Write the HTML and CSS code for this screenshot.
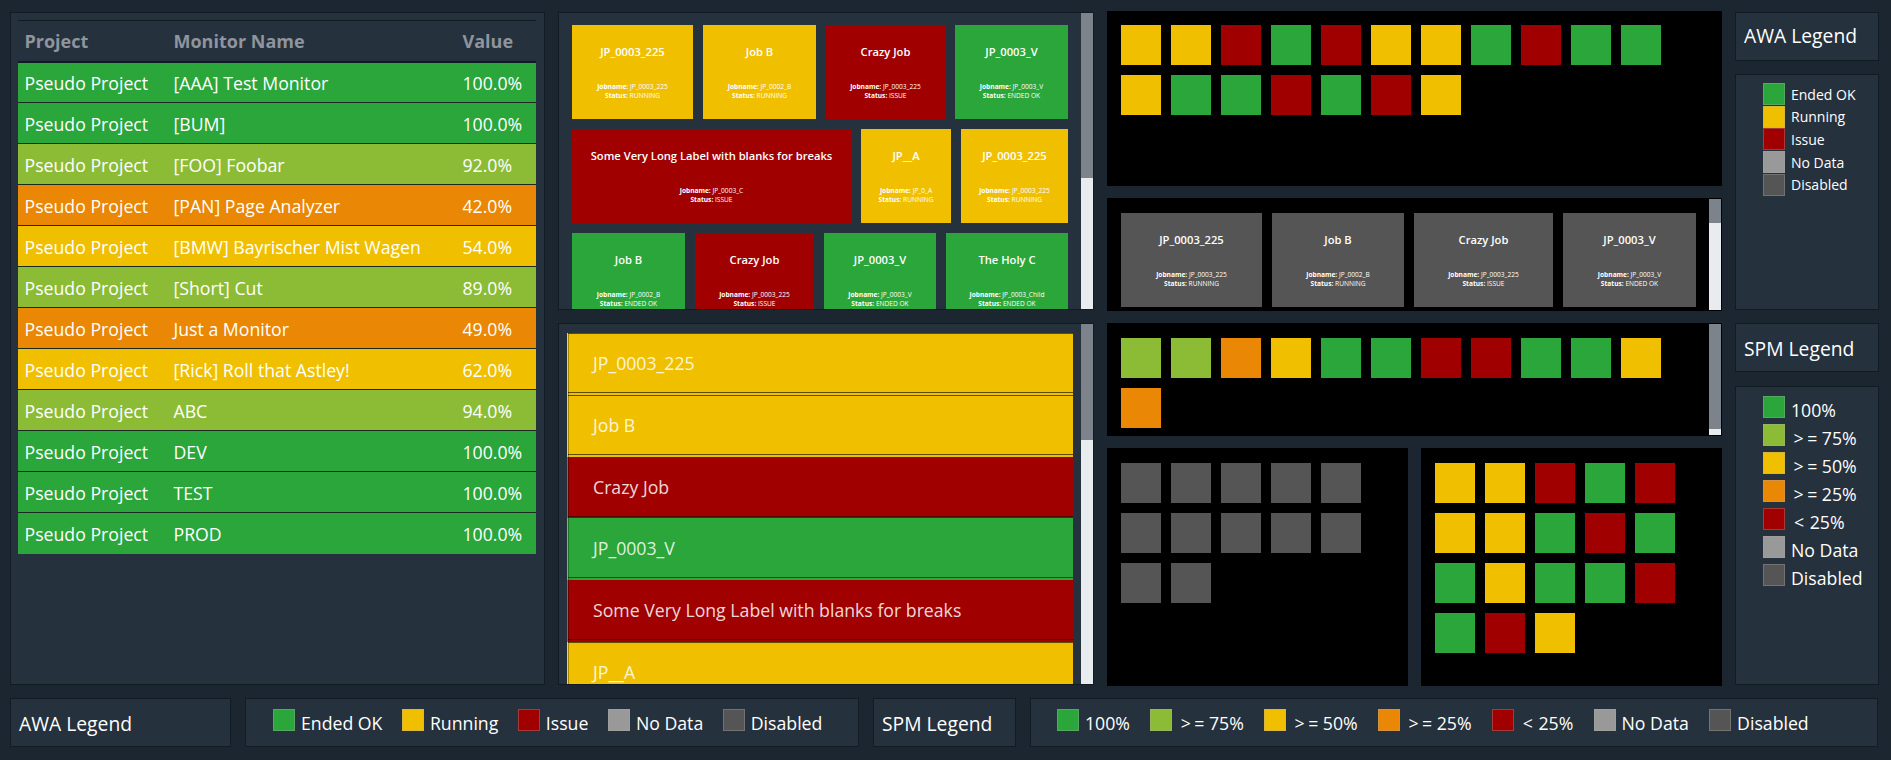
FILE: index.html
```html
<!DOCTYPE html>
<html lang="en">
<head>
  <meta charset="UTF-8">
  <title>Monitor Dashboard</title>
  <link rel="stylesheet" href="styles.css">
</head>
<body>

  <div class="dashboard">

    <section class="panel table-panel">
      <table class="monitor-table">
        <thead>
          <tr><th>Project</th><th>Monitor Name</th><th>Value</th></tr>
        </thead>
        <tbody>
          <tr class="bg-full"><td>Pseudo Project</td><td>[AAA] Test Monitor</td><td>100.0%</td></tr>
          <tr class="bg-full"><td>Pseudo Project</td><td>[BUM]</td><td>100.0%</td></tr>
          <tr class="bg-high"><td>Pseudo Project</td><td>[FOO] Foobar</td><td>92.0%</td></tr>
          <tr class="bg-low"><td>Pseudo Project</td><td>[PAN] Page Analyzer</td><td>42.0%</td></tr>
          <tr class="bg-mid"><td>Pseudo Project</td><td>[BMW] Bayrischer Mist Wagen</td><td>54.0%</td></tr>
          <tr class="bg-high"><td>Pseudo Project</td><td>[Short] Cut</td><td>89.0%</td></tr>
          <tr class="bg-low"><td>Pseudo Project</td><td>Just a Monitor</td><td>49.0%</td></tr>
          <tr class="bg-mid"><td>Pseudo Project</td><td>[Rick] Roll that Astley!</td><td>62.0%</td></tr>
          <tr class="bg-high"><td>Pseudo Project</td><td>ABC</td><td>94.0%</td></tr>
          <tr class="bg-full"><td>Pseudo Project</td><td>DEV</td><td>100.0%</td></tr>
          <tr class="bg-full"><td>Pseudo Project</td><td>TEST</td><td>100.0%</td></tr>
          <tr class="bg-full"><td>Pseudo Project</td><td>PROD</td><td>100.0%</td></tr>
        </tbody>
      </table>
    </section>

    <section class="panel scroll-panel">
      <div class="scroll-body tiles-body">
        <div class="tile-row row-a">
          <div class="tile bg-mid"><h4>JP_0003_225</h4><p><b>Jobname:</b> JP_0003_225<br><b>Status:</b> RUNNING</p></div>
          <div class="tile bg-mid"><h4>Job B</h4><p><b>Jobname:</b> JP_0002_B<br><b>Status:</b> RUNNING</p></div>
          <div class="tile bg-issue"><h4>Crazy Job</h4><p><b>Jobname:</b> JP_0003_225<br><b>Status:</b> ISSUE</p></div>
          <div class="tile bg-full"><h4>JP_0003_V</h4><p><b>Jobname:</b> JP_0003_V<br><b>Status:</b> ENDED OK</p></div>
        </div>
        <div class="tile-row row-b">
          <div class="tile bg-issue"><h4>Some Very Long Label with blanks for breaks</h4><p><b>Jobname:</b> JP_0003_C<br><b>Status:</b> ISSUE</p></div>
          <div class="tile bg-mid"><h4>JP__A</h4><p><b>Jobname:</b> JP_0_A<br><b>Status:</b> RUNNING</p></div>
          <div class="tile bg-mid"><h4>JP_0003_225</h4><p><b>Jobname:</b> JP_0003_225<br><b>Status:</b> RUNNING</p></div>
        </div>
        <div class="tile-row row-c">
          <div class="tile bg-full"><h4>Job B</h4><p><b>Jobname:</b> JP_0002_B<br><b>Status:</b> ENDED OK</p></div>
          <div class="tile bg-issue"><h4>Crazy Job</h4><p><b>Jobname:</b> JP_0003_225<br><b>Status:</b> ISSUE</p></div>
          <div class="tile bg-full"><h4>JP_0003_V</h4><p><b>Jobname:</b> JP_0003_V<br><b>Status:</b> ENDED OK</p></div>
          <div class="tile bg-full"><h4>The Holy C</h4><p><b>Jobname:</b> JP_0003_Child<br><b>Status:</b> ENDED OK</p></div>
        </div>
      </div>
      <div class="scrollbar"><div class="thumb thumb-tiles"></div></div>
    </section>

    <div class="black-stack stack-top">
      <section class="black-panel squares-panel top-squares">
        <i class="sq bg-mid"></i><i class="sq bg-mid"></i><i class="sq bg-issue"></i><i class="sq bg-full"></i><i class="sq bg-issue"></i><i class="sq bg-mid"></i><i class="sq bg-mid"></i><i class="sq bg-full"></i><i class="sq bg-issue"></i><i class="sq bg-full"></i><i class="sq bg-full"></i>
        <i class="sq bg-mid"></i><i class="sq bg-full"></i><i class="sq bg-full"></i><i class="sq bg-issue"></i><i class="sq bg-full"></i><i class="sq bg-issue"></i><i class="sq bg-mid"></i>
      </section>
      <section class="black-panel scroll-panel grey-panel">
        <div class="scroll-body grey-body">
          <div class="tile-row row-grey">
            <div class="tile bg-off"><h4>JP_0003_225</h4><p><b>Jobname:</b> JP_0003_225<br><b>Status:</b> RUNNING</p></div>
            <div class="tile bg-off"><h4>Job B</h4><p><b>Jobname:</b> JP_0002_B<br><b>Status:</b> RUNNING</p></div>
            <div class="tile bg-off"><h4>Crazy Job</h4><p><b>Jobname:</b> JP_0003_225<br><b>Status:</b> ISSUE</p></div>
            <div class="tile bg-off"><h4>JP_0003_V</h4><p><b>Jobname:</b> JP_0003_V<br><b>Status:</b> ENDED OK</p></div>
          </div>
        </div>
        <div class="scrollbar"><div class="thumb thumb-grey"></div></div>
      </section>
    </div>

    <div class="legend-col legend-col-top">
      <div class="panel legend-title">AWA Legend</div>
      <div class="panel legend-box legend-small">
        <div class="legend-item"><i class="swatch bg-full"></i>Ended OK</div>
        <div class="legend-item"><i class="swatch bg-mid"></i>Running</div>
        <div class="legend-item"><i class="swatch bg-issue"></i>Issue</div>
        <div class="legend-item"><i class="swatch bg-none"></i>No Data</div>
        <div class="legend-item"><i class="swatch bg-off"></i>Disabled</div>
      </div>
    </div>

    <section class="panel scroll-panel">
      <div class="scroll-body list-body">
        <div class="list-item bg-mid">JP_0003_225</div>
        <div class="list-item bg-mid">Job B</div>
        <div class="list-item bg-issue">Crazy Job</div>
        <div class="list-item bg-full">JP_0003_V</div>
        <div class="list-item bg-issue">Some Very Long Label with blanks for breaks</div>
        <div class="list-item bg-mid">JP__A</div>
      </div>
      <div class="scrollbar"><div class="thumb thumb-list"></div></div>
    </section>

    <div class="black-stack stack-bottom">
      <section class="black-panel scroll-panel spm-panel">
        <div class="scroll-body squares-panel spm-body">
          <i class="sq bg-high"></i><i class="sq bg-high"></i><i class="sq bg-low"></i><i class="sq bg-mid"></i><i class="sq bg-full"></i><i class="sq bg-full"></i><i class="sq bg-issue"></i><i class="sq bg-issue"></i><i class="sq bg-full"></i><i class="sq bg-full"></i><i class="sq bg-mid"></i>
          <i class="sq bg-low"></i>
        </div>
        <div class="scrollbar"><div class="thumb thumb-spm"></div></div>
      </section>
      <div class="black-split">
        <section class="black-panel squares-panel">
          <i class="sq bg-off"></i><i class="sq bg-off"></i><i class="sq bg-off"></i><i class="sq bg-off"></i><i class="sq bg-off"></i>
          <i class="sq bg-off"></i><i class="sq bg-off"></i><i class="sq bg-off"></i><i class="sq bg-off"></i><i class="sq bg-off"></i>
          <i class="sq bg-off"></i><i class="sq bg-off"></i>
        </section>
        <section class="black-panel squares-panel">
          <i class="sq bg-mid"></i><i class="sq bg-mid"></i><i class="sq bg-issue"></i><i class="sq bg-full"></i><i class="sq bg-issue"></i>
          <i class="sq bg-mid"></i><i class="sq bg-mid"></i><i class="sq bg-full"></i><i class="sq bg-issue"></i><i class="sq bg-full"></i>
          <i class="sq bg-full"></i><i class="sq bg-mid"></i><i class="sq bg-full"></i><i class="sq bg-full"></i><i class="sq bg-issue"></i>
          <i class="sq bg-full"></i><i class="sq bg-issue"></i><i class="sq bg-mid"></i>
        </section>
      </div>
    </div>

    <div class="legend-col legend-col-bottom">
      <div class="panel legend-title">SPM Legend</div>
      <div class="panel legend-box legend-large">
        <div class="legend-item"><i class="swatch bg-full"></i>100%</div>
        <div class="legend-item"><i class="swatch bg-high"></i><span><span class="ge">&gt;</span>= 75%</span></div>
        <div class="legend-item"><i class="swatch bg-mid"></i><span><span class="ge">&gt;</span>= 50%</span></div>
        <div class="legend-item"><i class="swatch bg-low"></i><span><span class="ge">&gt;</span>= 25%</span></div>
        <div class="legend-item"><i class="swatch bg-issue"></i><span><span class="lt">&lt;</span> 25%</span></div>
        <div class="legend-item"><i class="swatch bg-none"></i>No Data</div>
        <div class="legend-item"><i class="swatch bg-off"></i>Disabled</div>
      </div>
    </div>

    <div class="legend-bar">
      <div class="panel legend-title bar-awa-title">AWA Legend</div>
      <div class="panel bar-legend bar-awa">
        <div class="legend-item"><i class="swatch bg-full"></i>Ended OK</div>
        <div class="legend-item"><i class="swatch bg-mid"></i>Running</div>
        <div class="legend-item"><i class="swatch bg-issue"></i>Issue</div>
        <div class="legend-item"><i class="swatch bg-none"></i>No Data</div>
        <div class="legend-item"><i class="swatch bg-off"></i>Disabled</div>
      </div>
      <div class="panel legend-title bar-spm-title">SPM Legend</div>
      <div class="panel bar-legend bar-spm">
        <div class="legend-item"><i class="swatch bg-full"></i>100%</div>
        <div class="legend-item"><i class="swatch bg-high"></i><span><span class="ge">&gt;</span>= 75%</span></div>
        <div class="legend-item"><i class="swatch bg-mid"></i><span><span class="ge">&gt;</span>= 50%</span></div>
        <div class="legend-item"><i class="swatch bg-low"></i><span><span class="ge">&gt;</span>= 25%</span></div>
        <div class="legend-item"><i class="swatch bg-issue"></i><span><span class="lt">&lt;</span> 25%</span></div>
        <div class="legend-item"><i class="swatch bg-none"></i>No Data</div>
        <div class="legend-item"><i class="swatch bg-off"></i>Disabled</div>
      </div>
    </div>

  </div>

</body>
</html>
```

FILE: styles.css
```css
* {
  box-sizing: border-box;
}

html, body {
  height: 100%;
  margin: 0;
  overflow: hidden;
}

body {
  font-family: 'Open Sans', 'Noto Sans', sans-serif;
  font-size: 17.7px;
  background: #1c2630;
  color: #fff;
}

.dashboard {
  display: grid;
  grid-template-columns: 535px 536px 615px 144px;
  grid-template-rows: 298px 362px 49px;
  column-gap: 13px;
  row-gap: 13px;
  padding: 12px 0 0 10px;
}

/* status colours */
.bg-full { background-color: #2aa63a; }
.bg-high { background-color: #8cbc36; }
.bg-mid { background-color: #f0c000; }
.bg-low { background-color: #ea8704; }
.bg-issue { background-color: #a00000; }
.bg-none { background-color: #999; }
.bg-off { background-color: #555; }

.panel {
  background: #25313d;
  border: 1px solid #131b22;
}

.black-panel {
  background: #000;
}

.scroll-panel {
  display: flex;
  min-height: 0;
}

.black-panel.scroll-panel {
  border: 1px solid #000;
}

.scroll-body {
  flex: 1;
  min-width: 0;
  overflow: hidden;
}

.scrollbar {
  flex: none;
  width: 12px;
  background: #e9ecef;
}

.thumb {
  background: #7c838b;
}

.thumb-tiles { height: 165px; }
.thumb-list { height: 116px; }
.thumb-grey { height: 24px; }
.thumb-spm { height: 105px; }

/* table */
.table-panel {
  grid-row: 1 / 3;
  padding: 7px 8px 7px 7px;
}

.monitor-table {
  width: 100%;
  table-layout: fixed;
  border-collapse: collapse;
  border-top: 1px solid #131b22;
}

.monitor-table th:nth-child(1) { width: 149px; }
.monitor-table th:nth-child(2) { width: 289px; }

.monitor-table th {
  height: 41px;
  padding: 0 6.5px;
  text-align: left;
  font-size: 18px;
  font-weight: 700;
  color: #8f949d;
  border-bottom: 2px solid #131b22;
}

.monitor-table td {
  height: 41px;
  padding: 2px 6.5px 0;
  border-top: 1px solid #1a2a20;
}

/* tiles */
.tiles-body {
  padding: 12px 0 0 13px;
}

.tile-row {
  display: grid;
  gap: 10px;
  margin-bottom: 10px;
}

.row-a { grid-template-columns: 121px 113px 119px 113px; }
.row-b { grid-template-columns: 279px 90px 107px; }
.row-c { grid-template-columns: 113px 119px 112px 122px; }
.row-grey { grid-template-columns: 141px 132px 139px 133px; }

.tile {
  height: 94px;
  text-align: center;
  overflow: hidden;
}

.tile h4 {
  margin: 20px 0 0;
  font-size: 11.2px;
  line-height: 14px;
  font-weight: 600;
}

.tile p {
  margin: 22.5px 0 0;
  font-size: 6.6px;
  line-height: 9px;
}

/* list */
.list-body {
  padding: 9px 8px 0 8px;
}

.list-item {
  height: 61.8px;
  padding-left: 25px;
  line-height: 60px;
  color: rgba(255, 255, 255, 0.86);
  border-left: 1px solid rgba(255, 255, 255, 0.3);
  background-image:
    linear-gradient(rgba(0, 0, 0, 0.5), rgba(0, 0, 0, 0.5)),
    linear-gradient(rgba(0, 0, 0, 0.3), rgba(0, 0, 0, 0.3));
  background-repeat: no-repeat;
  background-size: 100% 1px, 1px 100%;
  background-position: 0 59px, 0 0;
}

.list-item.bg-mid {
  background-image:
    linear-gradient(rgba(0, 0, 0, 0.6), rgba(0, 0, 0, 0.6)),
    linear-gradient(rgba(0, 0, 0, 0.3), rgba(0, 0, 0, 0.3)),
    linear-gradient(rgba(0, 0, 0, 0.6), rgba(0, 0, 0, 0.6));
  background-size: 100% 1px, 1px 100%, 100% 1px;
  background-position: 0 59px, 0 0, 0 0;
}

/* squares */
.black-stack {
  display: flex;
  flex-direction: column;
  gap: 12px;
}

.stack-top {
  margin: -1px 0;
}

.stack-bottom {
  margin-bottom: -1px;
}

.top-squares {
  height: 175px;
}

.grey-panel,
.spm-panel {
  height: 113px;
}

.grey-body {
  padding: 14px 0 0 13px;
}

.squares-panel {
  display: flex;
  flex-wrap: wrap;
  align-content: flex-start;
  gap: 10px;
  padding: 14px;
}

.spm-body {
  padding: 14px 0 0 13px;
}

.black-split {
  flex: 1;
  display: flex;
  gap: 13px;
}

.black-split .squares-panel {
  flex: 1;
  padding: 15px 30px 15px 14px;
}

.sq {
  width: 40px;
  height: 40px;
}

/* legends */
.legend-col {
  display: flex;
  flex-direction: column;
  gap: 14px;
}

.legend-col-top {
  gap: 13px;
}

.legend-title {
  display: flex;
  align-items: center;
  height: 49px;
  padding: 2px 0 0 8px;
  font-size: 19.3px;
}

.legend-col-top .legend-title {
  padding: 0 0 2px 8px;
}

.legend-box {
  flex: 1;
}

.legend-item {
  display: flex;
  align-items: center;
  gap: 6px;
}

.swatch {
  flex: none;
  width: 22px;
  height: 22px;
  border: 1px solid rgba(170, 170, 170, 0.35);
}

.ge {
  margin-left: 2.5px;
  letter-spacing: 3.5px;
}

.lt {
  margin-left: 3px;
  letter-spacing: 1px;
}

.legend-small {
  padding: 8px 0 0 27px;
}

.legend-small .legend-item {
  height: 22.6px;
  font-size: 14px;
}

.legend-large {
  padding: 9px 0 0 27px;
}

.legend-large .legend-item {
  height: 28px;
}

.legend-large .swatch {
  margin-top: -6px;
}

/* bottom bar */
.legend-bar {
  grid-column: 1 / 5;
  display: flex;
  gap: 14px;
}

.bar-awa-title { width: 221px; }
.bar-spm-title { width: 143px; }

.bar-legend {
  display: flex;
  align-items: center;
  gap: 19.5px;
}

.bar-legend .swatch {
  margin-top: -6px;
}

.bar-awa {
  width: 614px;
  padding-left: 27px;
}

.bar-spm {
  width: 848px;
  padding-left: 26px;
  gap: 20.2px;
}
```
